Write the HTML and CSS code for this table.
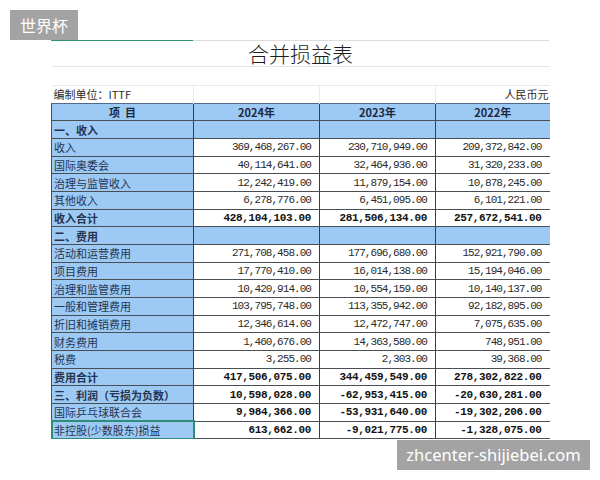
FILE: index.html
```html
<!DOCTYPE html>
<html lang="zh-CN">
<head>
<meta charset="utf-8">
<title>合并损益表</title>
<link rel="stylesheet" href="styles.css">
</head>
<body>
<div class="badge">世界杯</div>
<main class="sheet">
  <div class="topline"><span class="sel"></span><span class="rest"></span></div>
  <table class="pl">
    <colgroup>
      <col class="c-label"><col class="c-2024"><col class="c-2023"><col class="c-2022">
    </colgroup>
    <tr class="title"><td colspan="4">合并损益表</td></tr>
    <tr class="blank"><td colspan="4"></td></tr>
    <tr class="unit"><td>编制单位：ITTF</td><td></td><td></td><td class="rmb">人民币元</td></tr>
    <tr class="head"><th>项&nbsp;&nbsp;目</th><th>2024年</th><th>2023年</th><th>2022年</th></tr>
    <tr class="section"><td class="lb">一、收入</td><td></td><td></td><td></td></tr>
    <tr><td class="lb">收入</td><td class="n">369,468,267.00</td><td class="n">230,710,949.00</td><td class="n">209,372,842.00</td></tr>
    <tr><td class="lb">国际奥委会</td><td class="n">40,114,641.00</td><td class="n">32,464,936.00</td><td class="n">31,320,233.00</td></tr>
    <tr><td class="lb">治理与监管收入</td><td class="n">12,242,419.00</td><td class="n">11,879,154.00</td><td class="n">10,878,245.00</td></tr>
    <tr><td class="lb">其他收入</td><td class="n">6,278,776.00</td><td class="n">6,451,095.00</td><td class="n">6,101,221.00</td></tr>
    <tr class="total"><td class="lb">收入合计</td><td class="n">428,104,103.00</td><td class="n">281,506,134.00</td><td class="n">257,672,541.00</td></tr>
    <tr class="section"><td class="lb">二、费用</td><td></td><td></td><td></td></tr>
    <tr><td class="lb">活动和运营费用</td><td class="n">271,708,458.00</td><td class="n">177,696,680.00</td><td class="n">152,921,790.00</td></tr>
    <tr><td class="lb">项目费用</td><td class="n">17,770,410.00</td><td class="n">16,014,138.00</td><td class="n">15,194,046.00</td></tr>
    <tr><td class="lb">治理和监管费用</td><td class="n">10,420,914.00</td><td class="n">10,554,159.00</td><td class="n">10,140,137.00</td></tr>
    <tr><td class="lb">一般和管理费用</td><td class="n">103,795,748.00</td><td class="n">113,355,942.00</td><td class="n">92,182,895.00</td></tr>
    <tr><td class="lb">折旧和摊销费用</td><td class="n">12,346,614.00</td><td class="n">12,472,747.00</td><td class="n">7,075,635.00</td></tr>
    <tr><td class="lb">财务费用</td><td class="n">1,460,676.00</td><td class="n">14,363,580.00</td><td class="n">748,951.00</td></tr>
    <tr><td class="lb">税费</td><td class="n">3,255.00</td><td class="n">2,303.00</td><td class="n">39,368.00</td></tr>
    <tr class="total"><td class="lb">费用合计</td><td class="n">417,506,075.00</td><td class="n">344,459,549.00</td><td class="n">278,302,822.00</td></tr>
    <tr class="total"><td class="lb">三、利润（亏损为负数）</td><td class="n">10,598,028.00</td><td class="n">-62,953,415.00</td><td class="n">-20,630,281.00</td></tr>
    <tr class="bnum"><td class="lb">国际乒乓球联合会</td><td class="n">9,984,366.00</td><td class="n">-53,931,640.00</td><td class="n">-19,302,206.00</td></tr>
    <tr class="bnum"><td class="lb selected">非控股(少数股东)损益</td><td class="n">613,662.00</td><td class="n">-9,021,775.00</td><td class="n">-1,328,075.00</td></tr>
  </table>
</main>
<div class="watermark">zhcenter-shijiebei.com</div>
</body>
</html>
```
FILE: styles.css
```css
* { box-sizing: border-box; }
body {
  margin: 0;
  background: #fff;
  font-family: "Noto Sans CJK SC", "Noto Sans", sans-serif;
  color: #222;
}
.badge {
  position: absolute;
  left: 10px;
  top: 10px;
  width: 68px;
  height: 30px;
  background: #a3a3a3;
  color: #fff;
  font-size: 16px;
  line-height: 30px;
  text-align: center;
}
.watermark {
  position: absolute;
  left: 397px;
  top: 440px;
  width: 193px;
  height: 30px;
  background: #a3a3a3;
  color: #fff;
  font-family: "Noto Sans", sans-serif;
  font-size: 16.5px;
  line-height: 30px;
  text-align: center;
}
.sheet {
  padding: 40px 0 0 51px;
}
.topline {
  display: flex;
  width: 498px;
  height: 1px;
}
.topline .sel { width: 142px; background: #2e9a6c; }
.topline .rest { flex: 1; background: #dcdcdc; }
.pl {
  border-collapse: collapse;
  table-layout: fixed;
  width: 498px;
}
.c-label { width: 142px; }
.c-2024 { width: 126px; }
.c-2023 { width: 116px; }
.c-2022 { width: 114px; }
.pl td, .pl th {
  padding: 0 3px;
  font-size: 11px;
  line-height: 14px;
  white-space: nowrap;
}
.title td {
  height: 25px;
  padding: 0;
  font-size: 21px;
  font-weight: 300;
  line-height: 24px;
  text-align: center;
  vertical-align: middle;
  color: #1e1e1e;
  border-bottom: 1px solid #e4e4e4;
}
.blank td {
  height: 19px;
  border-bottom: 1px solid #e8e8e8;
}
.unit td {
  height: 18px;
  border-left: 1px solid #ececec;
  color: #2a2a2a;
  padding-left: 2px;
}
.unit td:first-child { border-left: none; }
.unit .rmb { text-align: right; padding-right: 1px; }
.head th, .pl tr:not(.title):not(.blank):not(.unit) td {
  height: 17.68px;
  border: 1px solid #4a4e55;
  border-right: none;
}
.head th:not(:last-child), .pl tr:not(.title):not(.blank):not(.unit) td:not(:last-child) {
  border-right: 1px solid #3a3d42;
}
.head th {
  background: #9ccaf4;
  font-weight: bold;
  color: #1c2840;
  text-align: center;
  border-top: 1px solid #4d6a8a;
}
.pl td.lb {
  background: #9ccaf4;
  color: #273451;
  padding-left: 2px;
  border-left: 1px solid #7d9cbd;
}
.section td { background: #9ccaf4; }
.section .lb { font-weight: bold; }
.pl td.n {
  font-family: "Liberation Mono", monospace;
  font-size: 11px;
  letter-spacing: -0.95px;
  text-align: right;
  padding-right: 8px;
  color: #2a2a2a;
}
.total .lb { font-weight: bold; color: #1a2540; }
.total td.n, .bnum td.n {
  font-weight: bold;
  letter-spacing: -0.35px;
  color: #111;
}
.pl td.selected {
  outline: 2px solid #2f8c78;
  outline-offset: -1px;
}
```
